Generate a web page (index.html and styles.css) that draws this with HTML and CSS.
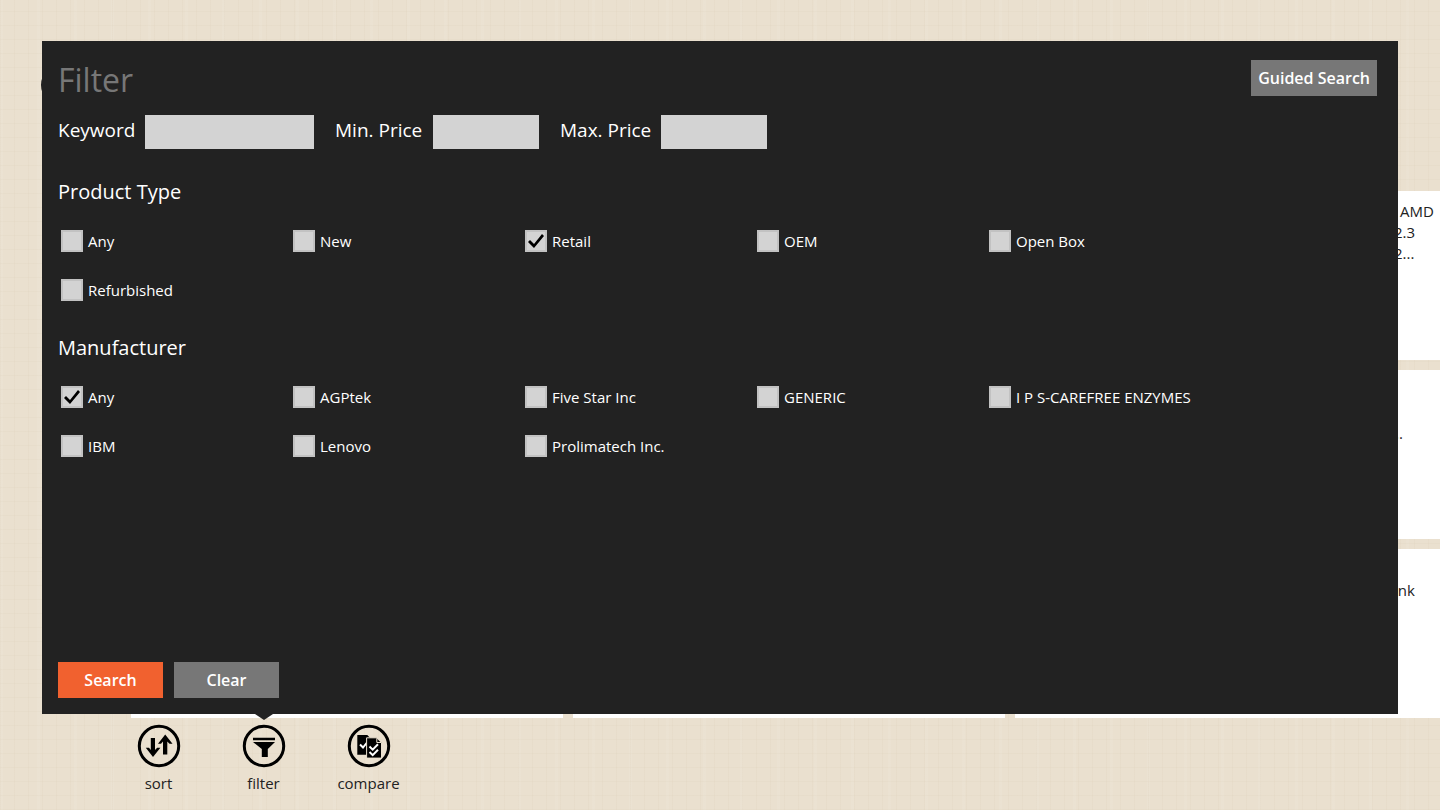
FILE: index.html
```html
<!DOCTYPE html>
<html lang="en">
<head>
<meta charset="utf-8">
<title>Filter</title>
<link rel="stylesheet" href="styles.css">
</head>
<body>
<div class="page">
  <header class="page-header"><button class="back" type="button" aria-label="Back"></button></header>
  <main class="products">
    <article class="card"></article>
    <article class="card"></article>
    <article class="card"><p class="card-text"><span class="lead">AMD</span><br>2.3<br>2...</p></article>
    <article class="card"></article>
    <article class="card"></article>
    <article class="card card-mid"><p class="card-text">...</p></article>
    <article class="card"></article>
    <article class="card"></article>
    <article class="card card-low"><p class="card-text">ink</p></article>
  </main>
  <nav class="appbar">
    <button class="app-button" type="button">
      <svg viewBox="0 0 44 44" aria-hidden="true"><circle class="ring" cx="22" cy="22" r="19.7"/><path d="M13.8 14h4.2v12l2.2-2.2h3.2L16 33 8.8 23.8H12l1.8 2.2zM26 30.6h4.3V17.5l2.2 2.3h3L28.2 10.6 21 19.8h3l2-2.3z"/></svg>
      sort
    </button>
    <button class="app-button" type="button">
      <svg viewBox="0 0 44 44" aria-hidden="true"><circle class="ring" cx="22" cy="22" r="19.7"/><path d="M11 13.7h22v2.6H11zM11 18h22l-7.2 7v8h-6v-8z"/></svg>
      filter
    </button>
    <button class="app-button" type="button">
      <svg viewBox="0 0 44 44" aria-hidden="true"><circle class="ring" cx="22" cy="22" r="19.7"/><path d="M10.3 11h10l2.4 2.4v17.3H10.3z"/><path class="tick" d="M13 20.5l3 3 4-5"/><path class="sheet" d="M19.6 13.8h10l4.9 4.9v15.4H19.6z"/><path class="fold" d="M29.8 14.2v4.3h4.3"/><path class="tick" d="M22.5 22.5l3.2 3.2 5.3-5.4M22.5 28l3.2 3.2 5.3-5.4"/></svg>
      compare
    </button>
  </nav>

  <form class="dialog">
    <div class="dialog-head">
      <h1>Filter</h1>
      <button class="button" type="button">Guided Search</button>
    </div>
    <div class="fields">
      <label class="label-keyword" for="keyword">Keyword</label>
      <input class="text wide" id="keyword" type="text">
      <label class="label-min" for="min">Min. Price</label>
      <input class="text" id="min" type="text">
      <label class="label-max" for="max">Max. Price</label>
      <input class="text" id="max" type="text">
    </div>
    <fieldset>
      <legend>Product Type</legend>
      <div class="options">
        <label><input type="checkbox">Any</label>
        <label><input type="checkbox">New</label>
        <label><input type="checkbox" checked>Retail</label>
        <label><input type="checkbox">OEM</label>
        <label><input type="checkbox">Open Box</label>
        <label><input type="checkbox">Refurbished</label>
      </div>
    </fieldset>
    <fieldset>
      <legend>Manufacturer</legend>
      <div class="options">
        <label><input type="checkbox" checked>Any</label>
        <label><input type="checkbox">AGPtek</label>
        <label><input type="checkbox">Five Star Inc</label>
        <label><input type="checkbox">GENERIC</label>
        <label><input type="checkbox">I P S-CAREFREE ENZYMES</label>
        <label><input type="checkbox">IBM</label>
        <label><input type="checkbox">Lenovo</label>
        <label><input type="checkbox">Prolimatech Inc.</label>
      </div>
    </fieldset>
    <div class="actions">
      <button class="button primary" type="submit">Search</button>
      <button class="button" type="reset">Clear</button>
    </div>
  </form>
</div>
</body>
</html>
```

FILE: styles.css
```css
* { box-sizing: border-box; }

body {
  margin: 0;
  font-family: "Open Sans", "Noto Sans", sans-serif;
  font-size: 15px;
  color: #222;
}

button, input { font: inherit; }

.page {
  position: relative;
  display: flex;
  flex-direction: column;
  min-height: 100vh;
  overflow: hidden;
  background-color: #eae0cf;
  background-image:
    repeating-linear-gradient(90deg, rgba(150, 120, 70, 0.03) 0 1px, transparent 1px 14px),
    repeating-linear-gradient(0deg, rgba(150, 120, 70, 0.03) 0 1px, transparent 1px 14px),
    repeating-linear-gradient(90deg, rgba(255, 255, 255, 0.06) 0 3px, transparent 3px 37px);
}

.page-header {
  height: 191px;
  padding: 64px 41px;
}

.back {
  width: 42px;
  height: 42px;
  border: 2px solid #222;
  border-radius: 50%;
  background: none;
}

.products {
  display: grid;
  grid-template-columns: repeat(3, 432px);
  grid-auto-rows: 169px;
  gap: 10px;
  padding-left: 131px;
}

.card {
  display: flex;
  padding: 10px 0 0 379px;
  background: #fff;
}

.card-mid { padding: 53px 0 0 376px; }
.card-low { padding-top: 31px; }

.card-text {
  margin: 0;
  line-height: 21px;
}

.lead { margin-left: 6px; }

.appbar {
  display: flex;
  padding: 6px 0 0 106px;
}

.app-button {
  display: flex;
  flex-direction: column;
  align-items: center;
  gap: 5px;
  width: 105px;
  padding: 0;
  border: 0;
  background: none;
  color: #222;
  line-height: 20px;
}

.app-button svg {
  width: 44px;
  height: 44px;
  fill: #000;
}

.app-button .ring {
  fill: none;
  stroke: #000;
  stroke-width: 3;
}

.app-button .sheet {
  stroke: #eae0cf;
  stroke-width: 1;
}

.app-button .fold {
  fill: none;
  stroke: #eae0cf;
  stroke-width: 1;
}

.app-button .tick {
  fill: none;
  stroke: #fff;
  stroke-width: 2;
}

.dialog {
  position: absolute;
  inset: 41px 42px 96px;
  display: flex;
  flex-direction: column;
  padding: 19px 21px 16px 16px;
  background: #222;
  color: #fff;
}

.dialog::after {
  content: "";
  position: absolute;
  top: 100%;
  left: 213px;
  border: solid transparent;
  border-width: 6px 9px 0;
  border-top-color: #222;
}

.dialog-head {
  display: flex;
  justify-content: space-between;
  align-items: flex-start;
}

h1 {
  margin: 0;
  font-size: 32px;
  font-weight: 400;
  line-height: 40px;
  color: #777;
}

.button {
  min-width: 105px;
  height: 36px;
  padding: 0 7px;
  border: 0;
  background: #777;
  color: #fff;
  font-size: 16px;
  font-weight: 600;
}

.primary { background: #f1612f; }

.fields {
  display: flex;
  align-items: flex-start;
  margin-top: 15px;
  font-size: 19px;
  line-height: 30px;
}

.label-keyword { width: 87px; }
.label-min { width: 98px; }
.label-max { width: 101px; }

.text {
  width: 106px;
  height: 34px;
  margin-right: 21px;
  padding: 0 8px;
  border: 0;
  background: #d3d3d3;
}

.wide { width: 169px; }

fieldset {
  min-width: 0;
  margin: 29px 0 0;
  padding: 0;
  border: 0;
}

fieldset + fieldset { margin-top: 30px; }

legend {
  padding: 0;
  font-size: 20px;
  line-height: 28px;
}

.options {
  display: grid;
  grid-template-columns: repeat(5, 232px);
  grid-auto-rows: 28px;
  row-gap: 21px;
  padding: 21px 0 0 3px;
}

.options label {
  display: flex;
  align-items: center;
  gap: 5px;
  white-space: nowrap;
}

.options input {
  appearance: none;
  width: 22px;
  height: 22px;
  margin: 0;
  border: 2px solid #c2c2c2;
  background: #d3d3d3;
}

.options input:checked::before {
  content: "";
  display: block;
  width: 18px;
  height: 18px;
  background: #000;
  clip-path: polygon(1px 10px, 3px 8px, 7px 12px, 15px 2px, 17px 4px, 7px 16px);
}

.actions {
  display: flex;
  gap: 11px;
  margin-top: auto;
}
```
